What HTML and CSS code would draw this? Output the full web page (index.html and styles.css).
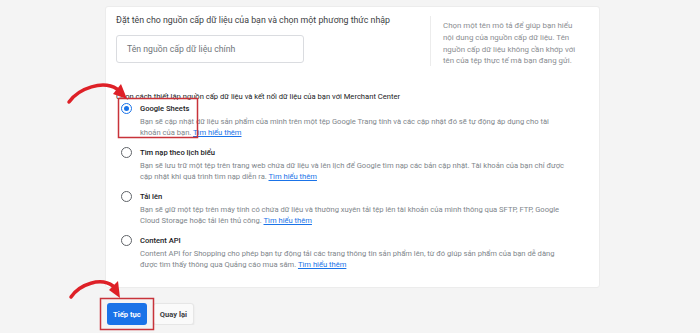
FILE: index.html
```html
<!DOCTYPE html>
<html>
<head>
    <title>Nguồn cấp dữ liệu</title>
    <link rel="stylesheet" href="styles.css">
</head>
<body>
    <div class="page">
        <div class="card">
            <div class="name-row">
                <div class="name-section">
                    <div class="section-title">Đặt tên cho nguồn cấp dữ liệu của bạn và chọn một phương thức nhập</div>
                    <div class="name-input">Tên nguồn cấp dữ liệu chính</div>
                </div>
                <div class="hint">
                    Chọn một tên mô tả để giúp bạn hiểu<br>
                    nội dung của nguồn cấp dữ liệu. Tên<br>
                    nguồn cấp dữ liệu không cần khớp với<br>
                    tên của tệp thực tế mà bạn đang gửi.
                </div>
            </div>

            <div class="methods-title">Chọn cách thiết lập nguồn cấp dữ liệu và kết nối dữ liệu của bạn với Merchant Center</div>

            <div class="option">
                <span class="radio checked"></span>
                <div class="option-body">
                    <div class="option-label">Google Sheets</div>
                    <div class="option-desc">Bạn sẽ cập nhật dữ liệu sản phẩm của mình trên một tệp Google Trang tính và các cập nhật đó sẽ tự động áp dụng cho tài<br>khoản của bạn. <a href="#">Tìm hiểu thêm</a></div>
                </div>
            </div>
            <div class="option">
                <span class="radio"></span>
                <div class="option-body">
                    <div class="option-label">Tìm nạp theo lịch biểu</div>
                    <div class="option-desc">Bạn sẽ lưu trữ một tệp trên trang web chứa dữ liệu và lên lịch để Google tìm nạp các bản cập nhật. Tài khoản của bạn chỉ được<br>cập nhật khi quá trình tìm nạp diễn ra. <a href="#">Tìm hiểu thêm</a></div>
                </div>
            </div>
            <div class="option">
                <span class="radio"></span>
                <div class="option-body">
                    <div class="option-label">Tải lên</div>
                    <div class="option-desc">Bạn sẽ giữ một tệp trên máy tính có chứa dữ liệu và thường xuyên tải tệp lên tài khoản của mình thông qua SFTP, FTP, Google<br>Cloud Storage hoặc tải lên thủ công. <a href="#">Tìm hiểu thêm</a></div>
                </div>
            </div>
            <div class="option">
                <span class="radio"></span>
                <div class="option-body">
                    <div class="option-label">Content API</div>
                    <div class="option-desc">Content API for Shopping cho phép bạn tự động tải các trang thông tin sản phẩm lên, từ đó giúp sản phẩm của bạn dễ dàng<br>được tìm thấy thông qua Quảng cáo mua sắm. <a href="#">Tìm hiểu thêm</a></div>
                </div>
            </div>
        </div>

        <div class="actions">
            <button class="btn-primary">Tiếp tục</button>
            <button class="btn-secondary">Quay lại</button>
        </div>
    </div>

    <!-- red annotations drawn over the screenshot -->
    <svg class="annotations" width="700" height="333" viewBox="0 0 700 333">
        <rect x="118.5" y="98.5" width="79" height="39" fill="none" stroke="#c8333a" stroke-width="1.5"/>
        <rect x="100.5" y="298.5" width="53" height="31" fill="none" stroke="#c8333a" stroke-width="1.5"/>
        <path d="M69 102 C79 88 103 80 117 89" fill="none" stroke="#de2027" stroke-width="3.5" stroke-linecap="round"/>
        <polygon points="127,99 113,94 121,84" fill="#de2027"/>
        <path d="M71 297 C80 284 101 277 113 286" fill="none" stroke="#de2027" stroke-width="3.5" stroke-linecap="round"/>
        <polygon points="120,298 109,290 118,281" fill="#de2027"/>
    </svg>
</body>
</html>
```

FILE: styles.css
```css
body {
    margin: 0;
    background-color: #f4f4f4;
    font-family: Roboto, "Noto Sans", Arial, sans-serif;
    color: #202124;
}

.page {
    width: 495px;
    padding: 6px 0 0 105px;
}

.card {
    height: 282px;
    box-sizing: border-box;
    background-color: #fff;
    border: 1px solid #ececec;
    border-radius: 3px;
    padding: 7px 0 0 10px;
}

.name-row {
    display: flex;
}

.name-section {
    width: 314px;
}

.section-title {
    font-size: 8.8px;
    line-height: 12px;
    color: #3c4043;
}

.name-input {
    width: 188px;
    height: 28px;
    box-sizing: border-box;
    margin-top: 9px;
    border: 1px solid #dadce0;
    border-radius: 3px;
    padding-left: 10px;
    font-size: 8.7px;
    line-height: 26px;
    color: #70757a;
}

.hint {
    margin-top: 2px;
    height: 46px;
    padding: 4px 0 0 12px;
    border-left: 1px solid #ececec;
    font-size: 7.9px;
    line-height: 11.8px;
    color: #8a8d91;
    white-space: nowrap;
}

.methods-title {
    margin-top: 25px;
    font-size: 7.6px;
    line-height: 11px;
    color: #202124;
}

.option {
    display: flex;
    margin-top: 1px;
}

.option + .option {
    margin-top: 9px;
}

.radio {
    width: 9px;
    height: 9px;
    margin: 0 8px 0 5px;
    border: 1.5px solid #5f6368;
    border-radius: 50%;
    position: relative;
    flex: none;
}

.radio.checked {
    border-color: #1a73e8;
}

.radio.checked::after {
    content: "";
    position: absolute;
    left: 2px;
    top: 2px;
    width: 5px;
    height: 5px;
    border-radius: 50%;
    background-color: #1a73e8;
}

.option-body {
    white-space: nowrap;
}

.option-label {
    font-size: 7.6px;
    font-weight: 500;
    line-height: 11px;
    color: #202124;
}

.option-desc {
    margin-top: 2px;
    font-size: 7.6px;
    line-height: 11px;
    color: #80868b;
}

.option-desc a {
    color: #1a73e8;
}

.actions {
    display: flex;
    gap: 6px;
    padding: 15px 0 0 2px;
}

.actions button {
    height: 22px;
    border-radius: 3px;
    font-family: Roboto, Arial, sans-serif;
    font-size: 7.6px;
    font-weight: 700;
    padding: 0 6px;
    white-space: nowrap;
    cursor: pointer;
}

.btn-primary {
    background-color: #1a73e8;
    color: #fff;
    border: none;
}

.btn-secondary {
    background-color: #fafafa;
    color: #3c4043;
    border: 1px solid #e6e6e6;
    box-shadow: 0 1px 2px rgba(0, 0, 0, 0.08);
}

.annotations {
    position: absolute;
    left: 0;
    top: 0;
    pointer-events: none;
}
```
